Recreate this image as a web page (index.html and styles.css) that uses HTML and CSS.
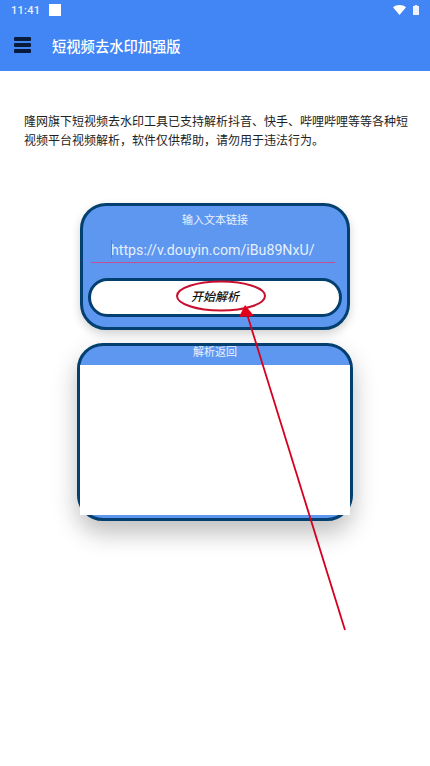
FILE: index.html
```html
<!DOCTYPE html>
<html lang="zh">
<head>
<meta charset="utf-8">
<title>短视频去水印加强版</title>
<link rel="stylesheet" href="styles.css">
</head>
<body>
<div class="app">
  <header class="header">
    <div class="status">
      <span class="time">11:41</span>
      <span class="square"></span>
      <span class="spacer"></span>
      <svg class="wifi" width="13" height="10" viewBox="0 0 13 10"><path d="M0 2.2C1.8.8 4 0 6.5 0S11.200.8 13 2.200L6.500 10z" fill="#fff"/></svg>
      <svg class="battery" width="6" height="10" viewBox="0 0 6 10"><path d="M1.800 0h2.400v1H6v9H0V1h1.800z" fill="#fff" opacity=".9"/></svg>
    </div>
    <div class="toolbar">
      <div class="menu"><i></i><i></i><i></i></div>
      <div class="title">短视频去水印加强版</div>
    </div>
  </header>
  <p class="intro">隆网旗下短视频去水印工具已支持解析抖音、快手、哔哩哔哩等等各种短视频平台视频解析，软件仅供帮助，请勿用于违法行为。</p>
  <section class="card input-card">
    <div class="card-title">输入文本链接</div>
    <div class="field"><span class="caret"></span>https://v.douyin.com/iBu89NxU/</div>
    <div class="button">开始解析</div>
  </section>
  <section class="card result-card">
    <div class="result-title">解析返回</div>
    <div class="result-body"></div>
  </section>
  <svg class="annotation" width="430" height="766" viewBox="0 0 430 766">
    <ellipse cx="221" cy="296" rx="44" ry="14.500" fill="none" stroke="#c8102e" stroke-width="2"/>
    <line x1="345" y1="630" x2="247" y2="314" stroke="#d4001f" stroke-width="1.800"/>
    <path d="M245 305L254 316L239 317z" fill="#e2001a"/>
  </svg>
</div>
</body>
</html>
```
FILE: styles.css
```css
* { box-sizing: border-box; }
html, body { margin: 0; padding: 0; background: #fff; }
body { font-family: Roboto, "Noto Sans CJK SC", sans-serif; }
.app { position: relative; width: 430px; height: 766px; overflow: hidden; }
.header { height: 71px; background: #4285f4; color: #fff; }
.status { height: 24px; display: flex; align-items: center; padding: 0 11px 4px 11px; }
.time { font-size: 11px; font-weight: 500; letter-spacing: .3px; color: #e8f0fe; }
.square { width: 12px; height: 12px; background: #fff; margin-left: 9px; }
.spacer { flex: 1; }
.battery { margin-left: 7px; }
.toolbar { height: 42px; display: flex; align-items: center; padding-left: 14px; }
.menu { width: 17px; display: flex; flex-direction: column; gap: 2px; margin-right: 21px; }
.menu i { display: block; height: 4px; background: #0a1a3a; border-radius: 1px; }
.title { font-size: 14.300px; font-weight: 500; }
.intro { margin: 40px 22px 0 24px; font-size: 12px; line-height: 19px; color: #222; font-family: "Noto Sans CJK SC", sans-serif; }
.card { background: #5e97ef; border: 3px solid #03406f; }
.input-card { width: 270px; height: 127px; margin: 54px 0 0 80px; border-radius: 26px; box-shadow: 0 4px 10px rgba(0,0,0,.18); display: flex; flex-direction: column; }
.card-title { margin-top: 7px; height: 16px; line-height: 16px; font-size: 11px; color: #eaf1fd; text-align: center; }
.field { position: relative; width: 244px; height: 28px; margin: 6px 0 0 8px; padding-left: 20px; border-bottom: 1px solid #c4508f; font-size: 14.200px; line-height: 30px; color: #e6eefc; white-space: nowrap; }
.caret { position: absolute; left: 20px; top: 5px; width: 1px; height: 18px; background: #c4508f; }
.button { width: 254px; height: 39px; margin: 15px 0 0 5px; background: #fff; border: 3px solid #03406f; border-radius: 20px; text-align: center; font-size: 12px; line-height: 33px; font-style: italic; font-weight: 500; color: #111; }
.result-card { width: 276px; height: 178px; margin: 13px 0 0 77px; border-radius: 26px; box-shadow: 0 12px 24px rgba(0,0,0,.26); }
.result-title { height: 19px; text-align: center; font-size: 11px; line-height: 14px; color: #eaf1fd; }
.result-body { height: 150px; background: #fff; }
.annotation { position: absolute; left: 0; top: 0; pointer-events: none; }
```
